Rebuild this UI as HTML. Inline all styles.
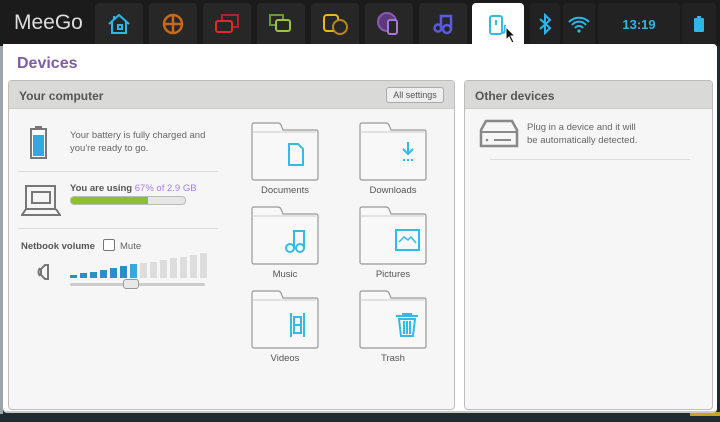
<!DOCTYPE html>
<html><head><style>
*{margin:0;padding:0;box-sizing:border-box}
body{width:720px;height:422px;overflow:hidden;background:#1f2b2f;font-family:"Liberation Sans","DejaVu Sans",sans-serif;position:relative}
.top{position:absolute;left:0;top:0;width:720px;height:46px;background:#1b1b1b}
.tab{position:absolute;top:3px;height:42px;width:48px;background:#272727;border-radius:4px 4px 0 0;display:flex;align-items:center;justify-content:center}
.main{position:absolute;left:3px;top:44px;width:714px;height:369px;background:#fff;border-radius:0 4px 4px 4px;border-bottom:2px solid #c8c8c8}
.pan{position:absolute;top:80px;border:1px solid #bdbdbd;border-radius:4px;background:#f6f6f6;overflow:hidden}
.ph{height:28px;background:#d9dad8;font-weight:bold;font-size:12px;color:#555;padding:8px 10px;border-bottom:1px solid #ccc}
.t{position:absolute;font-size:9.5px;color:#666;line-height:13px}
.f{position:absolute;width:68px;height:60px}
.fl{position:absolute;font-size:9.5px;color:#555;width:100px;text-align:center}
.hr{position:absolute;height:1px;background:#ddd}
</style></head><body>
<div style="position:absolute;left:0;top:44px;width:3px;height:370px;background:#9aa6aa"></div>
<div style="position:absolute;left:690px;top:412px;width:30px;height:4px;background:#c9a320"></div>
<div class="top">
<div style="position:absolute;left:14px;top:11px;font-size:21px;color:#ddd">MeeGo</div>
<div class="tab" style="left:95px"><svg width="26" height="24" viewBox="0 0 26 24"><path d="M3 12L13 3l10 9M6 10v11h14V10M8 4v4M12 13h4v4h-4z" fill="none" stroke="#2bb8e8" stroke-width="2"/></svg></div>
<div class="tab" style="left:149px"><svg width="24" height="24"><circle cx="12" cy="12" r="9" fill="none" stroke="#c86a1a" stroke-width="2.5"/><path d="M12 3v18M3 12h18" stroke="#c86a1a" stroke-width="2.5"/></svg></div>
<div class="tab" style="left:203px"><svg width="28" height="24"><rect x="9" y="3" width="16" height="12" fill="none" stroke="#b2222a" stroke-width="2"/><rect x="3" y="9" width="16" height="11" rx="2" fill="#272727" stroke="#e8252a" stroke-width="2"/></svg></div>
<div class="tab" style="left:257px"><svg width="28" height="24"><rect x="3" y="3" width="13" height="10" fill="none" stroke="#6a9a2a" stroke-width="2"/><rect x="9" y="8" width="14" height="11" rx="2" fill="#272727" stroke="#9ac43a" stroke-width="2"/></svg></div>
<div class="tab" style="left:311px"><svg width="28" height="24"><rect x="3" y="3" width="14" height="16" rx="3" fill="none" stroke="#f0b41a" stroke-width="2"/><circle cx="19" cy="15" r="7" fill="#272727" stroke="#b88a1a" stroke-width="2"/></svg></div>
<div class="tab" style="left:365px"><svg width="28" height="26"><circle cx="12" cy="11" r="9" fill="#5a3a7a" stroke="#8a5ab0" stroke-width="2"/><rect x="13" y="9" width="9" height="14" rx="2" fill="#272727" stroke="#a878d8" stroke-width="2"/></svg></div>
<div class="tab" style="left:419px"><svg width="24" height="24"><circle cx="7" cy="16" r="3.5" fill="none" stroke="#5a5ae0" stroke-width="2.5"/><circle cx="16" cy="17" r="4" fill="none" stroke="#5a5ae0" stroke-width="2.5"/><path d="M10 16V4h10v13" fill="none" stroke="#5a5ae0" stroke-width="2.5"/></svg></div>
<div class="tab" style="left:472px;width:52px;background:#fff;height:43px"><svg width="26" height="26"><rect x="5" y="4" width="12" height="18" rx="2" fill="none" stroke="#33bbe8" stroke-width="2"/><path d="M11 8v5M20 13v5q0 3-3 3" fill="none" stroke="#33bbe8" stroke-width="2"/></svg></div>
<svg style="position:absolute;left:505px;top:26px" width="14" height="18"><path d="M1 1v13l3-3 3 6 2-1-3-6h4z" fill="#111" stroke="#fff"/></svg>
<div class="tab" style="left:530px;width:30px;background:#222"><svg width="14" height="22"><path d="M2 6l10 9-5 5V2l5 5-10 9" fill="none" stroke="#2bb8e8" stroke-width="2"/></svg></div>
<div class="tab" style="left:563px;width:32px;background:#222"><svg width="24" height="20"><path d="M2 8a14 14 0 0 1 20 0M5 11a9 9 0 0 1 14 0M8 14a5 5 0 0 1 8 0" fill="none" stroke="#2bb8e8" stroke-width="2"/><circle cx="12" cy="17" r="1.6" fill="#2bb8e8"/></svg></div>
<div class="tab" style="left:598px;width:82px;background:#222;color:#2bb8e8;font-weight:bold;font-size:13px">13:19</div>
<div class="tab" style="left:682px;width:34px;background:#222"><svg width="12" height="18"><rect x="1" y="3" width="10" height="14" rx="1" fill="#2bb8e8"/><rect x="4" y="1" width="4" height="2" fill="#2bb8e8"/></svg></div>
</div>
<div class="main"></div>
<div style="position:absolute;left:17px;top:55px;font-size:16px;font-weight:bold;color:#7b5ea7">Devices</div>
<div class="pan" style="left:8px;width:447px;height:330px"><div class="ph">Your computer</div>
<div style="position:absolute;right:10px;top:6px;width:58px;height:16px;border:1px solid #aaa;border-radius:3px;background:#eee;font-size:9px;color:#555;text-align:center;line-height:14px">All settings</div></div>
<div class="pan" style="left:464px;width:249px;height:330px"><div class="ph">Other devices</div></div>
<svg style="position:absolute;left:30px;top:125px" width="17" height="34"><rect x="1" y="4" width="15" height="29" fill="#fff" stroke="#777" stroke-width="2"/><rect x="5" y="1" width="7" height="3" fill="#777"/><rect x="3" y="10" width="11" height="21" fill="#33a8dd"/></svg>
<div class="t" style="left:70px;top:129px">Your battery is fully charged and<br>you're ready to go.</div>
<div class="hr" style="left:18px;top:171px;width:200px"></div>
<svg style="position:absolute;left:21px;top:184px" width="40" height="32"><rect x="5" y="2" width="29" height="23" fill="none" stroke="#777" stroke-width="2"/><rect x="11" y="8" width="18" height="11" fill="none" stroke="#777" stroke-width="2"/><path d="M5 25l-4 6h38l-4-6" fill="none" stroke="#777" stroke-width="2"/></svg>
<div class="t" style="left:70px;top:182px;font-weight:bold;color:#555">You are using <span style="font-weight:normal;color:#a67ee8">67% of 2.9 GB</span></div>
<div style="position:absolute;left:70px;top:196px;width:116px;height:9px;border:1px solid #bbb;border-radius:4px;background:#e6e6e6;overflow:hidden"><div style="width:77px;height:100%;background:#8cc02c"></div></div>
<div class="hr" style="left:18px;top:228px;width:200px"></div>
<div class="t" style="left:21px;top:240px;font-weight:bold;color:#555">Netbook volume</div>
<div style="position:absolute;left:103px;top:239px;width:12px;height:12px;border:1px solid #777;border-radius:2px;background:#fff"></div>
<div class="t" style="left:120px;top:240px">Mute</div>
<svg style="position:absolute;left:36px;top:260px" width="20" height="24"><path d="M9 5h3v14H9l-4-4V9z" fill="none" stroke="#777" stroke-width="2"/><path d="M4 8q-3 4 0 8" fill="none" stroke="#777" stroke-width="2"/></svg>
<div style="position:absolute;left:70px;top:252px;display:flex;align-items:flex-end;gap:3px;height:26px">
<div style="width:7px;height:3px;background:#2a8ec8"></div><div style="width:7px;height:5px;background:#2a8ec8"></div><div style="width:7px;height:6px;background:#2a8ec8"></div><div style="width:7px;height:8px;background:#2a8ec8"></div><div style="width:7px;height:10px;background:#2a8ec8"></div><div style="width:7px;height:12px;background:#2a8ec8"></div><div style="width:7px;height:14px;background:#3aa8dc"></div><div style="width:7px;height:15px;background:#ddd"></div><div style="width:7px;height:16px;background:#ddd"></div><div style="width:7px;height:18px;background:#ddd"></div><div style="width:7px;height:20px;background:#ddd"></div><div style="width:7px;height:21px;background:#ddd"></div><div style="width:7px;height:23px;background:#ddd"></div><div style="width:7px;height:25px;background:#ddd"></div></div>
<div style="position:absolute;left:70px;top:283px;width:135px;height:3px;background:#ccc;border-radius:2px"></div>
<div style="position:absolute;left:123px;top:279px;width:16px;height:10px;background:#e8e8e8;border:1px solid #999;border-radius:3px"></div>
<svg width="0" height="0" style="position:absolute"><defs><g id="fd"><path d="M1 3q0-2 2-2h24q2 0 3 2l2 5h33q2 0 2 2v46q0 2-2 2H3q-2 0-2-2z" fill="#f8f8f8" stroke="#999" stroke-width="1.2"/><path d="M2 10h63" stroke="#ccc"/></g></defs></svg>
<svg class="f" style="left:251px;top:122px"><use href="#fd"/><path d="M38 22h9l5 5v16H38z" fill="none" stroke="#33bbe8" stroke-width="2"/></svg>
<svg class="f" style="left:359px;top:122px"><use href="#fd"/><path d="M49 20v12M44 27l5 5 5-5" fill="none" stroke="#33bbe8" stroke-width="2"/><path d="M44 38h2M48 38h2M52 38h2" stroke="#33bbe8" stroke-width="2"/></svg>
<svg class="f" style="left:251px;top:206px"><use href="#fd"/><circle cx="39" cy="42" r="4" fill="none" stroke="#33bbe8" stroke-width="2"/><circle cx="49" cy="42" r="4" fill="none" stroke="#33bbe8" stroke-width="2"/><path d="M43 42V25h10v17" fill="none" stroke="#33bbe8" stroke-width="2"/></svg>
<svg class="f" style="left:359px;top:206px"><use href="#fd"/><rect x="37" y="24" width="23" height="20" fill="none" stroke="#33bbe8" stroke-width="2"/><path d="M40 36l5-5 4 3 3-3 5 6" fill="none" stroke="#33bbe8" stroke-width="1.5"/></svg>
<svg class="f" style="left:251px;top:290px"><use href="#fd"/><path d="M40 23v24M53 23v24M43 27h7v16h-7zM43 35h7" fill="none" stroke="#33bbe8" stroke-width="2"/></svg>
<svg class="f" style="left:359px;top:290px"><use href="#fd"/><path d="M37 26h22M40 29h16l-2 17H42zM45 31v13M48 31v13M51 31v13M44 26v-2h8v2" fill="none" stroke="#33bbe8" stroke-width="2"/></svg>
<div class="fl" style="left:235px;top:185px">Documents</div>
<div class="fl" style="left:343px;top:185px">Downloads</div>
<div class="fl" style="left:235px;top:269px">Music</div>
<div class="fl" style="left:343px;top:269px">Pictures</div>
<div class="fl" style="left:235px;top:353px">Videos</div>
<div class="fl" style="left:343px;top:353px">Trash</div>
<svg style="position:absolute;left:478px;top:118px" width="42" height="32"><path d="M3 12l5-9h26l5 9v16H3z" fill="none" stroke="#888" stroke-width="2.5"/><path d="M3 14h36M16 22h17" stroke="#888" stroke-width="2"/><circle cx="9" cy="22" r="1.3" fill="#888"/></svg>
<div class="t" style="left:527px;top:121px">Plug in a device and it will<br>be automatically detected.</div>
<div class="hr" style="left:490px;top:159px;width:200px"></div>
</body></html>
